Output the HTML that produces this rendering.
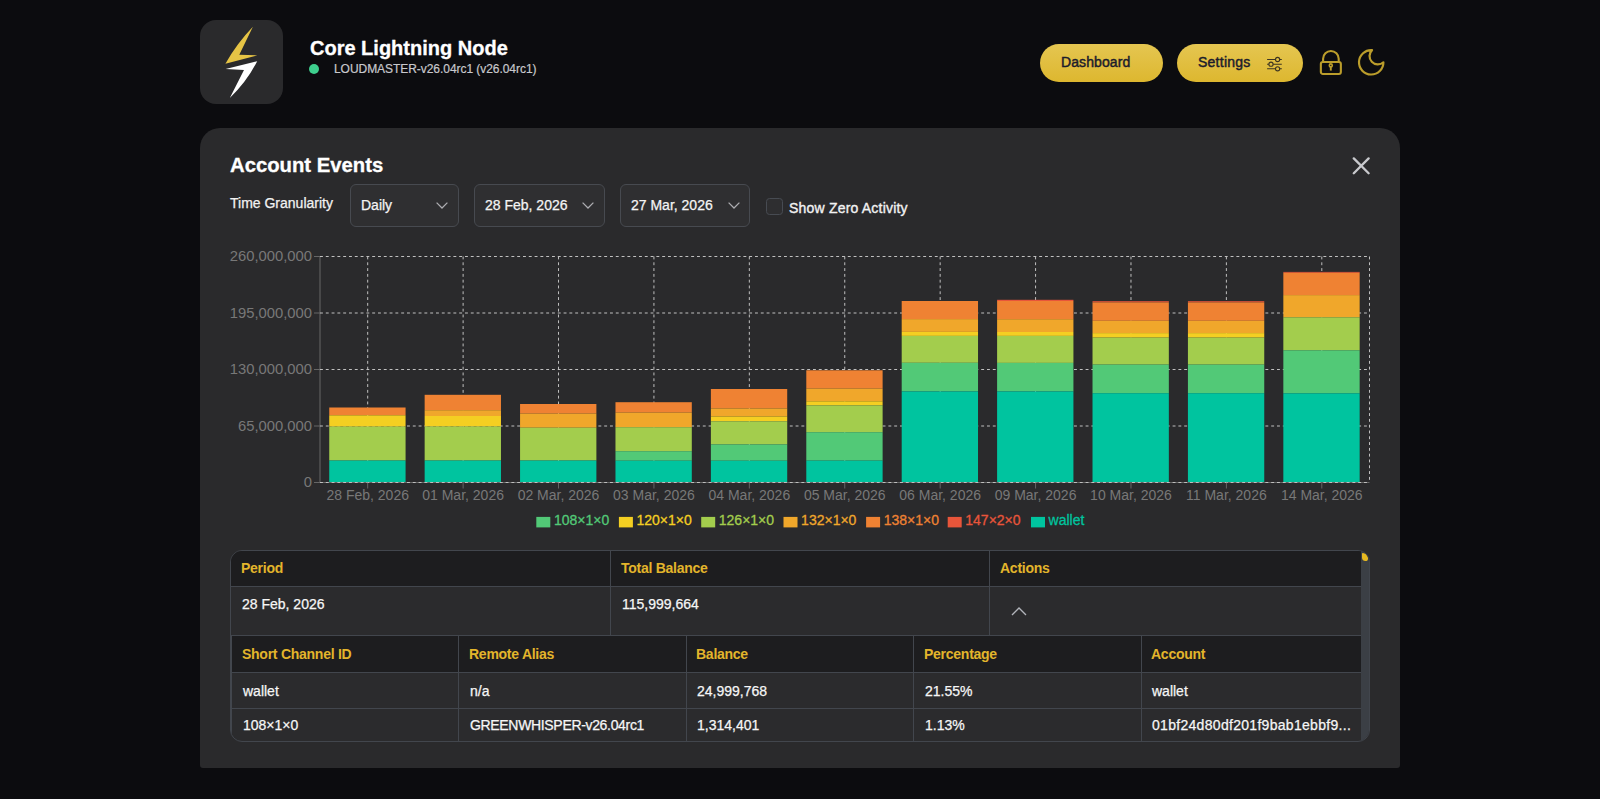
<!DOCTYPE html>
<html>
<head>
<meta charset="utf-8">
<style>
*{box-sizing:border-box;margin:0;padding:0}
html,body{width:1600px;height:799px;overflow:hidden;background:#0c0c0f;font-family:"Liberation Sans",sans-serif;color:#fff}
.abs{position:absolute}
.logo{left:200px;top:20px;width:83px;height:84px;border-radius:16px;background:#2a2a2c}
.title{left:310px;top:37px;font-size:20px;font-weight:bold;line-height:22px;white-space:nowrap;-webkit-text-stroke:0.3px #fff}
.dot{left:309px;top:64px;width:10px;height:10px;border-radius:50%;background:#3ecf8e}
.sub{left:334px;top:62px;font-size:12px;line-height:14px;color:#c8c8cc;white-space:nowrap;-webkit-text-stroke:0.2px #c8c8cc;letter-spacing:-0.05px}
.btn{top:44px;height:38px;border-radius:19px;background:linear-gradient(#e5c651,#ddb72f);color:#1c1c2c;font-size:14px;line-height:36px;-webkit-text-stroke:0.45px #1c1c2c}
.card{left:200px;top:128px;width:1200px;height:640px;border-radius:20px 20px 3px 3px;background:#2a2a2c}
.h2{left:230px;top:154px;font-size:20.3px;font-weight:bold;line-height:22px;white-space:nowrap;-webkit-text-stroke:0.3px #fff}
.lbl{left:230px;top:195px;font-size:14px;line-height:16px;white-space:nowrap;color:#f2f2f2;-webkit-text-stroke:0.25px #f2f2f2}
.sel{top:184px;height:43px;border:1px solid #474a50;border-radius:6px;background:#2f2f31;font-size:14px;line-height:40px;padding-left:10px;color:#f4f4f4;white-space:nowrap;-webkit-text-stroke:0.25px #f4f4f4}
.chev{position:absolute;top:17px;width:12px;height:7px}
.chk{left:766px;top:198px;width:16.5px;height:16.5px;border:1px solid #474b52;border-radius:3.5px;background:#2e2e30}
.th{font-size:14px;font-weight:bold;letter-spacing:-0.26px;color:#e3b52b;line-height:16px;white-space:nowrap}
.td{font-size:14px;color:#f6f6f6;line-height:16px;white-space:nowrap;-webkit-text-stroke:0.25px #f6f6f6}
.chkl{left:789px;top:200px;font-size:14px;line-height:16px;color:#f2f2f2;white-space:nowrap;letter-spacing:0.2px;-webkit-text-stroke:0.35px #f2f2f2}
</style>
</head>
<body>
<div class="abs logo">
<svg width="83" height="84" viewBox="0 0 83 84">
<path d="M52.9 6.8Q36.7 23.6 25.4 43.8L57.4 35.4L39.3 34.8Z" fill="#e6c445"/>
<path d="M25.6 49L57.2 41.3Q46.7 61.9 29.8 78L44 50Z" fill="#ffffff"/>
</svg>
</div>
<div class="abs title">Core Lightning Node</div>
<div class="abs dot"></div>
<div class="abs sub">LOUDMASTER-v26.04rc1 (v26.04rc1)</div>

<div class="abs btn" style="left:1040px;width:123px;padding-left:21px;letter-spacing:0.1px">Dashboard</div>
<div class="abs btn" style="left:1177px;width:126px;padding-left:21px;letter-spacing:0.25px">Settings
<svg class="abs" style="left:89px;top:12px" width="17" height="16" viewBox="0 0 17 16" fill="none" stroke="#3d3522" stroke-width="1.1">
<path d="M1.1 3.5h8.4M13.7 3.5h2.1M1.1 8.2h1.8M7.1 8.2h8.7M1.1 12.8h8.4M13.7 12.8h2.1"/>
<circle cx="11.6" cy="3.5" r="2.1"/><circle cx="5" cy="8.2" r="2.1"/><circle cx="11.6" cy="12.8" r="2.1"/>
</svg>
</div>
<svg class="abs" style="left:1316px;top:46px" width="28" height="32" viewBox="0 0 28 32" fill="none" stroke="#bb9d2b" stroke-width="2.1">
<rect x="4.85" y="15.95" width="20" height="12" rx="2"/>
<path d="M7.1 15.9V12.8A7.8 7.8 0 0 1 22.7 12.8V15.9"/>
<circle cx="14.8" cy="19.4" r="1.45" stroke-width="1.7"/><path d="M14.8 21v3.6" stroke-width="1.9"/>
</svg>
<svg class="abs" style="left:1352px;top:44px" width="38" height="36" viewBox="0 0 38 36" fill="none" stroke="#bb9d2b" stroke-width="2.2" stroke-linejoin="round">
<path d="M20.04 6.13A12.2 12.2 0 1 0 31.4 18.23A8.3 8.3 0 0 1 20.04 6.13Z"/>
</svg>

<div class="abs card"></div>
<div class="abs h2">Account Events</div>
<svg class="abs" style="left:1352px;top:157px" width="18" height="18" viewBox="0 0 18 18" stroke="#c8c9cd" stroke-width="2.3" stroke-linecap="round">
<path d="M1.8 1.4L16.6 16.2M16.6 1.4L1.8 16.2"/>
</svg>
<div class="abs lbl">Time Granularity</div>
<div class="abs sel" style="left:350px;width:109px">Daily
<svg class="chev" style="left:85px" viewBox="0 0 12 7" fill="none" stroke="#adadb1" stroke-width="1.25"><path d="M0.6 0.6L6 6L11.4 0.6"/></svg></div>
<div class="abs sel" style="left:474px;width:131px">28 Feb, 2026
<svg class="chev" style="left:107px" viewBox="0 0 12 7" fill="none" stroke="#adadb1" stroke-width="1.25"><path d="M0.6 0.6L6 6L11.4 0.6"/></svg></div>
<div class="abs sel" style="left:620px;width:130px">27 Mar, 2026
<svg class="chev" style="left:107px" viewBox="0 0 12 7" fill="none" stroke="#adadb1" stroke-width="1.25"><path d="M0.6 0.6L6 6L11.4 0.6"/></svg></div>
<div class="abs chk"></div>
<div class="abs chkl">Show Zero Activity</div>

<!--CHART-->
<svg class="abs" style="left:0;top:0" width="1600" height="799" viewBox="0 0 1600 799" font-family="Liberation Sans, sans-serif">
<path d="M320.0 256.5V482.5H1369.5" stroke="#666" stroke-width="1" fill="none"/>
<path d="M320.0 256.5H1369.5 M320.0 313.0H1369.5 M320.0 369.5H1369.5 M320.0 426.0H1369.5 M320.0 482.5H1369.5 M367.70 256.5V482.5 M463.11 256.5V482.5 M558.52 256.5V482.5 M653.93 256.5V482.5 M749.34 256.5V482.5 M844.75 256.5V482.5 M940.16 256.5V482.5 M1035.57 256.5V482.5 M1130.98 256.5V482.5 M1226.39 256.5V482.5 M1321.80 256.5V482.5 M1369.5 256.5V482.5" stroke="#c0c0c0" stroke-width="1" stroke-dasharray="2.9 2.9" fill="none"/>
<rect x="329.24" y="407.5" width="76.33" height="7.80" fill="#ef8233"/>
<rect x="329.24" y="415.3" width="76.33" height="11.30" fill="#f4cf22"/>
<rect x="329.24" y="426.6" width="76.33" height="33.90" fill="#a3cd4d"/>
<rect x="329.24" y="460.5" width="76.33" height="21.50" fill="#00c49f"/>
<rect x="424.65" y="394.8" width="76.33" height="15.40" fill="#ef8233"/>
<rect x="424.65" y="410.2" width="76.33" height="5.80" fill="#f0a72b"/>
<rect x="424.65" y="416.0" width="76.33" height="10.50" fill="#f4cf22"/>
<rect x="424.65" y="426.5" width="76.33" height="34.00" fill="#a3cd4d"/>
<rect x="424.65" y="460.5" width="76.33" height="21.50" fill="#00c49f"/>
<rect x="520.06" y="404.0" width="76.33" height="9.60" fill="#ef8233"/>
<rect x="520.06" y="413.6" width="76.33" height="14.10" fill="#f0a72b"/>
<rect x="520.06" y="427.7" width="76.33" height="32.80" fill="#a3cd4d"/>
<rect x="520.06" y="460.5" width="76.33" height="21.50" fill="#00c49f"/>
<rect x="615.47" y="402.2" width="76.33" height="10.40" fill="#ef8233"/>
<rect x="615.47" y="412.6" width="76.33" height="14.60" fill="#f0a72b"/>
<rect x="615.47" y="427.2" width="76.33" height="24.00" fill="#a3cd4d"/>
<rect x="615.47" y="451.2" width="76.33" height="9.50" fill="#52c977"/>
<rect x="615.47" y="460.7" width="76.33" height="21.30" fill="#00c49f"/>
<rect x="710.88" y="389.0" width="76.33" height="19.50" fill="#ef8233"/>
<rect x="710.88" y="408.5" width="76.33" height="8.00" fill="#f0a72b"/>
<rect x="710.88" y="416.5" width="76.33" height="4.80" fill="#f4cf22"/>
<rect x="710.88" y="421.3" width="76.33" height="23.10" fill="#a3cd4d"/>
<rect x="710.88" y="444.4" width="76.33" height="16.30" fill="#52c977"/>
<rect x="710.88" y="460.7" width="76.33" height="21.30" fill="#00c49f"/>
<rect x="806.29" y="370.3" width="76.33" height="18.30" fill="#ef8233"/>
<rect x="806.29" y="388.6" width="76.33" height="12.70" fill="#f0a72b"/>
<rect x="806.29" y="401.3" width="76.33" height="4.10" fill="#f4cf22"/>
<rect x="806.29" y="405.4" width="76.33" height="26.80" fill="#a3cd4d"/>
<rect x="806.29" y="432.2" width="76.33" height="28.40" fill="#52c977"/>
<rect x="806.29" y="460.6" width="76.33" height="21.40" fill="#00c49f"/>
<rect x="901.70" y="301.0" width="76.33" height="18.10" fill="#ef8233"/>
<rect x="901.70" y="319.1" width="76.33" height="12.80" fill="#f0a72b"/>
<rect x="901.70" y="331.9" width="76.33" height="4.00" fill="#f4cf22"/>
<rect x="901.70" y="335.9" width="76.33" height="26.90" fill="#a3cd4d"/>
<rect x="901.70" y="362.8" width="76.33" height="28.60" fill="#52c977"/>
<rect x="901.70" y="391.4" width="76.33" height="90.60" fill="#00c49f"/>
<rect x="997.10" y="299.8" width="76.33" height="1.20" fill="#e8553a"/>
<rect x="997.10" y="301.0" width="76.33" height="18.20" fill="#ef8233"/>
<rect x="997.10" y="319.2" width="76.33" height="12.80" fill="#f0a72b"/>
<rect x="997.10" y="332.0" width="76.33" height="3.90" fill="#f4cf22"/>
<rect x="997.10" y="335.9" width="76.33" height="27.00" fill="#a3cd4d"/>
<rect x="997.10" y="362.9" width="76.33" height="28.50" fill="#52c977"/>
<rect x="997.10" y="391.4" width="76.33" height="90.60" fill="#00c49f"/>
<rect x="1092.51" y="301.2" width="76.33" height="1.20" fill="#e8553a"/>
<rect x="1092.51" y="302.4" width="76.33" height="18.40" fill="#ef8233"/>
<rect x="1092.51" y="320.8" width="76.33" height="12.30" fill="#f0a72b"/>
<rect x="1092.51" y="333.1" width="76.33" height="4.50" fill="#f4cf22"/>
<rect x="1092.51" y="337.6" width="76.33" height="27.00" fill="#a3cd4d"/>
<rect x="1092.51" y="364.6" width="76.33" height="28.60" fill="#52c977"/>
<rect x="1092.51" y="393.2" width="76.33" height="88.80" fill="#00c49f"/>
<rect x="1187.92" y="301.2" width="76.33" height="1.20" fill="#e8553a"/>
<rect x="1187.92" y="302.4" width="76.33" height="18.40" fill="#ef8233"/>
<rect x="1187.92" y="320.8" width="76.33" height="12.30" fill="#f0a72b"/>
<rect x="1187.92" y="333.1" width="76.33" height="4.50" fill="#f4cf22"/>
<rect x="1187.92" y="337.6" width="76.33" height="27.00" fill="#a3cd4d"/>
<rect x="1187.92" y="364.6" width="76.33" height="28.60" fill="#52c977"/>
<rect x="1187.92" y="393.2" width="76.33" height="88.80" fill="#00c49f"/>
<rect x="1283.33" y="271.9" width="76.33" height="0.90" fill="#e8553a"/>
<rect x="1283.33" y="272.8" width="76.33" height="22.30" fill="#ef8233"/>
<rect x="1283.33" y="295.1" width="76.33" height="22.20" fill="#f0a72b"/>
<rect x="1283.33" y="317.3" width="76.33" height="33.00" fill="#a3cd4d"/>
<rect x="1283.33" y="350.3" width="76.33" height="43.00" fill="#52c977"/>
<rect x="1283.33" y="393.3" width="76.33" height="88.70" fill="#00c49f"/>
<path d="M314 256.5H320.0 M314 313.0H320.0 M314 369.5H320.0 M314 426.0H320.0 M314 482.5H320.0 M367.70 482.5V488.5 M463.11 482.5V488.5 M558.52 482.5V488.5 M653.93 482.5V488.5 M749.34 482.5V488.5 M844.75 482.5V488.5 M940.16 482.5V488.5 M1035.57 482.5V488.5 M1130.98 482.5V488.5 M1226.39 482.5V488.5 M1321.80 482.5V488.5" stroke="#666" stroke-width="1" fill="none"/>
<text x="312" y="261.1" text-anchor="end" font-size="14.8" fill="#787878">260,000,000</text>
<text x="312" y="317.6" text-anchor="end" font-size="14.8" fill="#787878">195,000,000</text>
<text x="312" y="374.1" text-anchor="end" font-size="14.8" fill="#787878">130,000,000</text>
<text x="312" y="430.6" text-anchor="end" font-size="14.8" fill="#787878">65,000,000</text>
<text x="312" y="487.1" text-anchor="end" font-size="14.8" fill="#787878">0</text>
<text x="367.70" y="500.3" text-anchor="middle" font-size="14" fill="#787878">28 Feb, 2026</text>
<text x="463.11" y="500.3" text-anchor="middle" font-size="14" fill="#787878">01 Mar, 2026</text>
<text x="558.52" y="500.3" text-anchor="middle" font-size="14" fill="#787878">02 Mar, 2026</text>
<text x="653.93" y="500.3" text-anchor="middle" font-size="14" fill="#787878">03 Mar, 2026</text>
<text x="749.34" y="500.3" text-anchor="middle" font-size="14" fill="#787878">04 Mar, 2026</text>
<text x="844.75" y="500.3" text-anchor="middle" font-size="14" fill="#787878">05 Mar, 2026</text>
<text x="940.16" y="500.3" text-anchor="middle" font-size="14" fill="#787878">06 Mar, 2026</text>
<text x="1035.57" y="500.3" text-anchor="middle" font-size="14" fill="#787878">09 Mar, 2026</text>
<text x="1130.98" y="500.3" text-anchor="middle" font-size="14" fill="#787878">10 Mar, 2026</text>
<text x="1226.39" y="500.3" text-anchor="middle" font-size="14" fill="#787878">11 Mar, 2026</text>
<text x="1321.80" y="500.3" text-anchor="middle" font-size="14" fill="#787878">14 Mar, 2026</text>
<rect x="536.3" y="516.9" width="14" height="10.5" fill="#52c977"/>
<text x="553.9" y="525.1" font-size="14" fill="#52c977" stroke="#52c977" stroke-width="0.3">108×1×0</text>
<rect x="618.9" y="516.9" width="14" height="10.5" fill="#f4cf22"/>
<text x="636.5" y="525.1" font-size="14" fill="#f4cf22" stroke="#f4cf22" stroke-width="0.3">120×1×0</text>
<rect x="701.2" y="516.9" width="14" height="10.5" fill="#a3cd4d"/>
<text x="718.8" y="525.1" font-size="14" fill="#a3cd4d" stroke="#a3cd4d" stroke-width="0.3">126×1×0</text>
<rect x="783.5" y="516.9" width="14" height="10.5" fill="#f0a72b"/>
<text x="801.1" y="525.1" font-size="14" fill="#f0a72b" stroke="#f0a72b" stroke-width="0.3">132×1×0</text>
<rect x="866.1" y="516.9" width="14" height="10.5" fill="#ef8233"/>
<text x="883.7" y="525.1" font-size="14" fill="#ef8233" stroke="#ef8233" stroke-width="0.3">138×1×0</text>
<rect x="947.7" y="516.9" width="14" height="10.5" fill="#e8553a"/>
<text x="965.3" y="525.1" font-size="14" fill="#e8553a" stroke="#e8553a" stroke-width="0.3">147×2×0</text>
<rect x="1031.0" y="516.9" width="14" height="10.5" fill="#00c49f"/>
<text x="1048.6" y="525.1" font-size="14" fill="#00c49f" stroke="#00c49f" stroke-width="0.3">wallet</text>
</svg>
<!--/CHART-->

<!--TABLE-->
<div class="abs" style="left:230px;top:550px;width:1140px;height:192px;border:1px solid #42464d;border-radius:12px;overflow:hidden;background:#2b2b2d">
<div class="abs" style="left:0px;top:0px;width:1130px;height:35px;background:#1d1d1f"></div>
<div class="abs" style="left:0px;top:35px;width:1130px;height:1px;background:#42464d"></div>
<div class="abs" style="left:0px;top:84px;width:1130px;height:1px;background:#42464d"></div>
<div class="abs" style="left:379px;top:0px;width:1px;height:84px;background:#42464d"></div>
<div class="abs" style="left:758px;top:0px;width:1px;height:84px;background:#42464d"></div>
<div class="abs" style="left:1px;top:85px;width:1129px;height:36px;background:#1d1d1f"></div>
<div class="abs" style="left:0px;top:85px;width:1px;height:106px;background:#42464d"></div>
<div class="abs" style="left:1px;top:121px;width:1129px;height:1px;background:#42464d"></div>
<div class="abs" style="left:1px;top:157px;width:1129px;height:1px;background:#42464d"></div>
<div class="abs" style="left:227px;top:85px;width:1px;height:106px;background:#42464d"></div>
<div class="abs" style="left:455px;top:85px;width:1px;height:106px;background:#42464d"></div>
<div class="abs" style="left:682px;top:85px;width:1px;height:106px;background:#42464d"></div>
<div class="abs" style="left:910px;top:85px;width:1px;height:106px;background:#42464d"></div>
<div class="abs" style="left:1130px;top:0px;width:9px;height:191px;background:#3b3f45"></div>
<div class="abs" style="left:1131px;top:2px;width:6px;height:8px;border-radius:1px 6px 3px 4px;background:#e6b820"></div>
<div class="abs th" style="left:10px;top:9px">Period</div>
<div class="abs th" style="left:390px;top:9px">Total Balance</div>
<div class="abs th" style="left:769px;top:9px">Actions</div>
<div class="abs td" style="left:11px;top:45px">28 Feb, 2026</div>
<div class="abs td" style="left:391px;top:45px">115,999,664</div>
<svg class="abs" style="left:780px;top:55px" width="16" height="10" viewBox="0 0 16 10" fill="none" stroke="#b2b5bb" stroke-width="1.35"><path d="M1 9L8 2L15 9"/></svg>
<div class="abs th" style="left:11px;top:95px">Short Channel ID</div>
<div class="abs th" style="left:238px;top:95px">Remote Alias</div>
<div class="abs th" style="left:465px;top:95px">Balance</div>
<div class="abs th" style="left:693px;top:95px">Percentage</div>
<div class="abs th" style="left:920px;top:95px">Account</div>
<div class="abs td" style="left:12px;top:132px">wallet</div>
<div class="abs td" style="left:239px;top:132px">n/a</div>
<div class="abs td" style="left:466px;top:132px">24,999,768</div>
<div class="abs td" style="left:694px;top:132px">21.55%</div>
<div class="abs td" style="left:921px;top:132px">wallet</div>
<div class="abs td" style="left:12px;top:166px;">108×1×0</div>
<div class="abs td" style="left:239px;top:166px;letter-spacing:-0.33px">GREENWHISPER-v26.04rc1</div>
<div class="abs td" style="left:466px;top:166px;">1,314,401</div>
<div class="abs td" style="left:694px;top:166px;">1.13%</div>
<div class="abs td" style="left:921px;top:166px;letter-spacing:0.3px">01bf24d80df201f9bab1ebbf9...</div>
</div>
<!--/TABLE-->
</body>
</html>
